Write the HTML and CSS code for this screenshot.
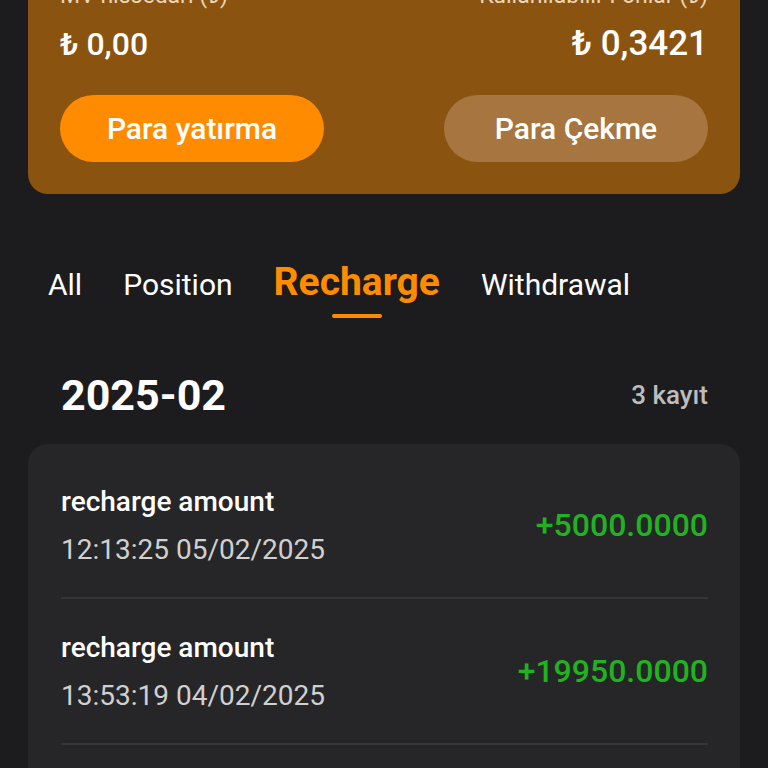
FILE: index.html
```html
<!DOCTYPE html>
<html lang="tr">

<head>
    <meta charset="UTF-8">
    <meta name="viewport" content="width=device-width, initial-scale=1.0">
    <title>Hesap Geçmişi</title>
    <link rel="stylesheet" href="styles.css">
</head>

<body>
    <div class="page">
        <!-- Balance card -->
        <div class="balance">
            <div class="balance-row">
                <div class="balance-col">
                    <p class="balance-label">MV hissedarı (₺)</p>
                    <p class="balance-value">₺ 0,00</p>
                </div>
                <div class="balance-col right">
                    <p class="balance-label">Kullanılabilir Fonlar (₺)</p>
                    <p class="balance-value big">₺ 0,3421</p>
                </div>
            </div>
            <div class="balance-actions">
                <button class="btn btn-deposit">Para yatırma</button>
                <button class="btn btn-withdraw">Para Çekme</button>
            </div>
        </div>

        <!-- Tabs -->
        <div class="tabs">
            <span class="tab">All</span>
            <span class="tab">Position</span>
            <span class="tab active">Recharge</span>
            <span class="tab">Withdrawal</span>
        </div>

        <div class="month">
            <h2 class="month-title">2025-02</h2>
            <span class="month-count">3 kayıt</span>
        </div>

        <div class="records">
            <div class="record">
                <div class="record-info">
                    <p class="record-title">recharge amount</p>
                    <p class="record-date">12:13:25 05/02/2025</p>
                </div>
                <span class="record-amount">+5000.0000</span>
            </div>
            <div class="record">
                <div class="record-info">
                    <p class="record-title">recharge amount</p>
                    <p class="record-date">13:53:19 04/02/2025</p>
                </div>
                <span class="record-amount">+19950.0000</span>
            </div>
            <div class="record">
                <div class="record-info">
                    <p class="record-title">recharge amount</p>
                    <p class="record-date">09:41:02 03/02/2025</p>
                </div>
                <span class="record-amount">+1000.0000</span>
            </div>
        </div>
    </div>
</body>

</html>
```

FILE: styles.css
```css
body {
    margin: 0;
    background-color: #1c1c1e;
    font-family: Roboto, "Noto Sans", Arial, sans-serif;
    color: #fff;
    overflow: hidden;
}

p {
    margin: 0;
}

.page {
    padding: 0 28px;
    margin-top: -41px; /* page is scrolled a bit */
}

.balance {
    background-color: #8b5310;
    border-radius: 0 0 20px 20px;
    padding: 22px 32px 32px 32px;
}

.balance-row {
    display: flex;
    justify-content: space-between;
}

.balance-col.right {
    text-align: right;
}

.balance-label {
    font-size: 23px;
    line-height: 30px;
    color: #ecd6b4;
}

.balance-value {
    font-size: 32px;
    font-weight: 500;
    line-height: 40px;
    margin-top: 13px;
}

.balance-value.big {
    font-size: 35px;
}

.balance-actions {
    display: flex;
    justify-content: space-between;
    margin-top: 31px;
}

.btn {
    width: 264px;
    height: 67px;
    border: none;
    border-radius: 34px;
    color: #fff;
    font-family: inherit;
    font-size: 30px;
    font-weight: 500;
}

.btn-deposit {
    background-color: #ff8c00;
}

.btn-withdraw {
    background-color: #a7753f;
}

.tabs {
    display: flex;
    align-items: baseline;
    gap: 41px;
    padding: 64px 20px 0 20px;
    height: 68px;
}

.tab {
    font-size: 30px;
    line-height: 48px;
    position: relative;
}

.tab.active {
    color: #ff8c00;
    font-size: 39px;
    font-weight: 700;
}

.tab.active::after {
    content: "";
    position: absolute;
    left: 50%;
    bottom: -12px;
    width: 50px;
    height: 4px;
    margin-left: -25px;
    border-radius: 2px;
    background-color: #ff8c00;
}

.month {
    display: flex;
    justify-content: space-between;
    align-items: center;
    padding: 0 32px 0 33px;
    height: 98px;
    margin-top: 20px;
}

.month-title {
    margin: 0;
    font-size: 43px;
    font-weight: 700;
}

.month-count {
    font-size: 26px;
    font-weight: 500;
    color: #bdbdbd;
}

.records {
    background-color: #262628;
    border-radius: 20px;
    margin-top: 0;
    padding: 9px 32px 0 33px;
}

.record {
    display: flex;
    justify-content: space-between;
    align-items: center;
    height: 144px;
    border-bottom: 2px solid #363638;
}

.record-title {
    font-size: 28px;
    font-weight: 500;
}

.record-date {
    font-size: 28px;
    color: #d0d0d0;
    margin-top: 15px;
}

.record-amount {
    font-size: 32px;
    font-weight: 500;
    color: #1fb31f;
}
```
